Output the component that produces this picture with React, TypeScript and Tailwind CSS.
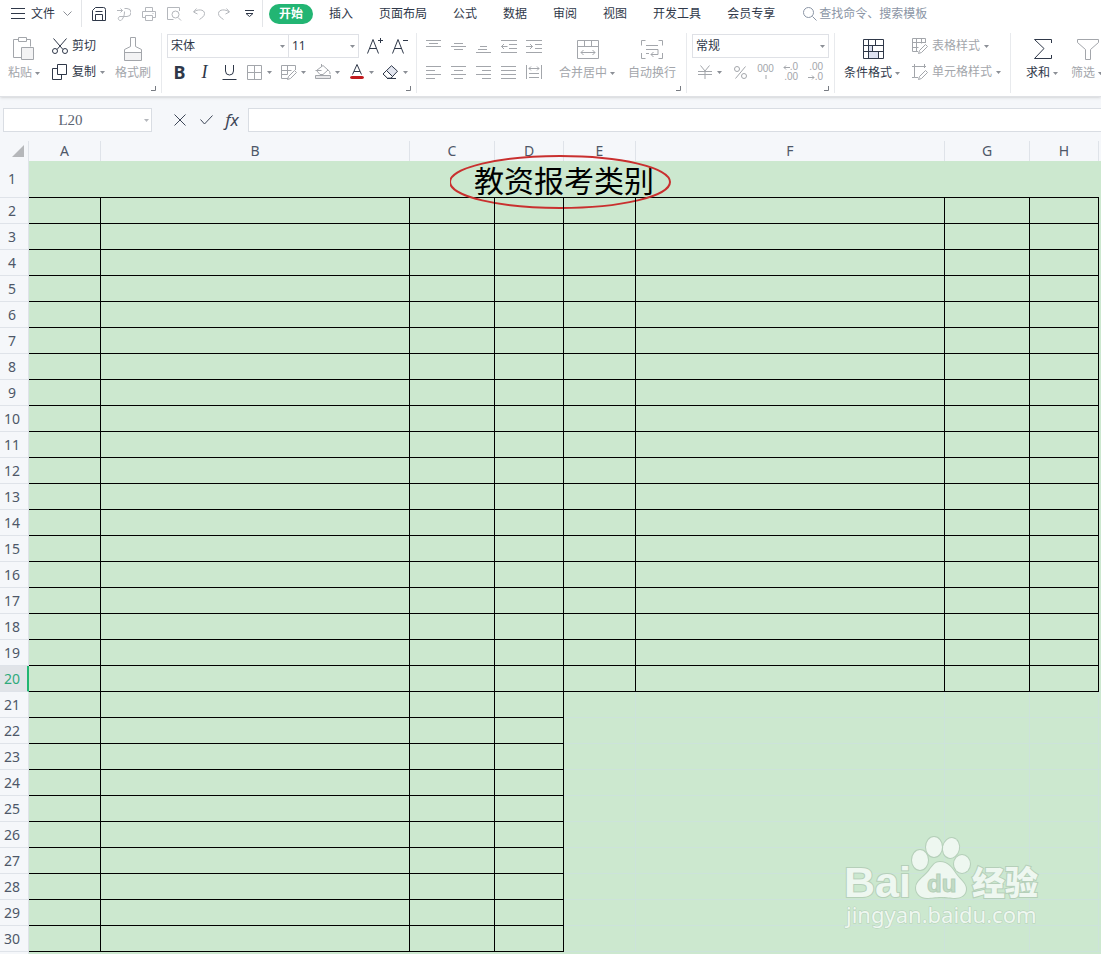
import { useState } from 'react';
import type { ReactNode } from 'react';
import clsx from 'clsx';

const columns = [
  { name: 'A', width: 'w-[72px]' },
  { name: 'B', width: 'w-[309px]' },
  { name: 'C', width: 'w-[85px]' },
  { name: 'D', width: 'w-[69px]' },
  { name: 'E', width: 'w-[72px]' },
  { name: 'F', width: 'w-[309px]' },
  { name: 'G', width: 'w-[85px]' },
  { name: 'H', width: 'w-[69px]' },
];

const rows = Array.from({ length: 29 }, (_, i) => i + 2);
const tabs = ['开始', '插入', '页面布局', '公式', '数据', '审阅', '视图', '开发工具', '会员专享'];

type IconProps = { w: number; h: number; d?: string; className?: string; children?: ReactNode };

function Icon({ w, h, d, className, children }: IconProps) {
  return (
    <svg width={w} height={h} viewBox={`0 0 ${w} ${h}`} fill="none" stroke="currentColor" className={clsx('shrink-0', className)} aria-hidden="true">
      {d && <path d={d} />}
      {children}
    </svg>
  );
}

function Caret({ className }: { className?: string }) {
  return (
    <svg width="5" height="3" viewBox="0 0 5 3" className={clsx('shrink-0', className)} aria-hidden="true">
      <path d="M0 0h5L2.5 3z" fill="currentColor" />
    </svg>
  );
}

function TallButton({ label, caret, muted, className, children }: { label: string; caret?: boolean; muted?: boolean; className: string; children: ReactNode }) {
  return (
    <button className={clsx('flex h-12 shrink-0 flex-col', muted ? 'text-[#a3a6ab]' : 'text-[#2f3849]', className)}>
      <span className="flex h-8 w-full items-center justify-center">{children}</span>
      <span className="flex h-4 items-center gap-[3px] leading-4 whitespace-nowrap">
        {label}
        {caret && <Caret className="text-[#8b8f96]" />}
      </span>
    </button>
  );
}

function RowButton({ label, caret, muted, children }: { label: string; caret?: boolean; muted?: boolean; children: ReactNode }) {
  return (
    <button className={clsx('flex h-[26px] items-center whitespace-nowrap', muted ? 'text-[#a3a6ab]' : 'text-[#2f3849]')}>
      <span className="flex w-5 items-center">{children}</span>
      {label}
      {caret && <Caret className="ml-1 text-[#8b8f96]" />}
    </button>
  );
}

function Tool({ label, caret, muted, children }: { label: string; caret?: boolean; muted?: boolean; children: ReactNode }) {
  return (
    <button
      aria-label={label}
      className={clsx('flex h-[26px] shrink-0 items-center', caret ? 'w-[34px]' : 'w-[25px]', muted ? 'text-[#a3a6ab]' : 'text-[#2f3849]')}
    >
      <span className="flex w-[25px] items-center justify-center">{children}</span>
      {caret && <Caret className="text-[#8b8f96]" />}
    </button>
  );
}

function Group({ className, launcher, children }: { className: string; launcher?: boolean; children: ReactNode }) {
  return (
    <div className={clsx('relative flex h-[60px] shrink-0', className)}>
      {children}
      {launcher && <Icon w={5} h={5} d="M4.5 0v4.5H0" className="absolute right-[5px] bottom-[2px] text-[#777b82]" />}
    </div>
  );
}

function Select({ label, options, className }: { label: string; options: string[]; className: string }) {
  return (
    <div className={clsx('relative h-6', className)}>
      <select aria-label={label} className="h-6 w-full appearance-none border border-[#dfe1e6] bg-white pl-[3px] text-xs leading-[22px] text-[#2f3849] outline-none">
        {options.map((o) => (
          <option key={o}>{o}</option>
        ))}
      </select>
      <Caret className="pointer-events-none absolute top-[11px] right-1 text-[#8b8f96]" />
    </div>
  );
}

function TitleBar() {
  const [active, setActive] = useState('开始');
  return (
    <div className="flex h-[27px] items-center text-[#2f3849]">
      <button className="ml-[11px] flex items-center">
        <Icon w={14} h={11} d="M0 .5h14M0 5.5h14M0 10.5h14" />
        <span className="mx-[6px] w-6 whitespace-nowrap">文件</span>
        <Icon w={13} h={6} d="M2.5.5l4 4 4-4" className="text-[#8b8f96]" />
      </button>
      <div className="ml-[7px] h-[27px] border-r border-[#e3e5e8]" />
      <div className="flex items-center gap-[11px] pl-[10px] text-[#b4b7bc]">
        <button aria-label="保存" className="text-[#2f3849]">
          <Icon w={14} h={14} d="M.5 13.5v-10l3-3h8a2 2 0 0 1 2 2v11zM3.5 13.5v-6h7v6M3.5 4.5h7" />
        </button>
        <button aria-label="输出">
          <Icon w={14} h={14} d="M0 3.5h5.5M3.5 1.5l2 2-2 2M7.5 1.5H10a3.5 3.5 0 0 1 0 8H3a2 2 0 1 0 2 3c1.5-2 2.5-4 2.5-8" />
        </button>
        <button aria-label="打印">
          <Icon w={14} h={14} d="M3.5 4V.5h7V4M3 10.5H.5v-6h13v6H11M3.5 8.5h7v5h-7zM10.5 6.5h1" />
        </button>
        <button aria-label="打印预览">
          <Icon w={15} h={14} d="M12.5 4V.5H.5v12h6M11 10.5l3 3">
            <circle cx="8.5" cy="7.5" r="3.5" />
          </Icon>
        </button>
        <button aria-label="撤销">
          <Icon w={13} h={12} d="M3.5.5l-3 3.5 4 2M1 4c3-3 10.5-3 10.5 1.5 0 3-2.5 4-5 6" />
        </button>
        <button aria-label="恢复">
          <Icon w={13} h={12} d="M9.5.5l3 3.5-4 2M12 4C9 1 1.5 1 1.5 5.500c0 3 2.5 4 5 6" />
        </button>
        <button aria-label="自定义快速访问工具栏" className="ml-1 text-[#2f3849]">
          <Icon w={9} h={8} d="M0 .5h9M1 3.5l3.5 3 3.5-3z" />
        </button>
      </div>
      <div className="ml-2 h-[27px] border-r border-[#e3e5e8]" />
      <nav className="ml-[6px] flex items-center">
        {tabs.map((tab) => (
          <button
            key={tab}
            onClick={() => setActive(tab)}
            className={clsx('h-5 whitespace-nowrap', tab === active ? 'mr-[3px] rounded-full bg-[#22b573] px-[10px] font-bold text-white' : 'px-[13px]')}
          >
            {tab}
          </button>
        ))}
      </nav>
      <label className="ml-[15px] flex items-center gap-[2px] text-[#8b95a5]">
        <Icon w={14} h={14} d="M9.5 9.5l4 4">
          <circle cx="5.5" cy="5.5" r="5" />
        </Icon>
        <input aria-label="查找" placeholder="查找命令、搜索模板" className="w-32 bg-transparent text-xs outline-none placeholder:text-[#8b95a5]" />
      </label>
    </div>
  );
}

function Ribbon() {
  return (
    <div className="flex divide-x divide-[#e8eaed] overflow-hidden pt-[6px] pb-[3px]">
      <Group launcher className="w-[162px] pl-2">
        <TallButton label="粘贴" caret muted className="w-8">
          <Icon w={22} h={24} d="M5.5 2.5h-5v18h8M13.5 2.5h4v7M5.5.5h8v4h-8z">
            <path d="M8.5 10.5h12v12h-12z" fill="#f3f3f4" />
          </Icon>
        </TallButton>
        <div className="ml-3 flex w-[53px] flex-col">
          <RowButton label="剪切">
            <Icon w={16} h={16} d="M1.5.5l9.5 11M14.5.5L5 11.5">
              <circle cx="3" cy="13" r="2.5" />
              <circle cx="13" cy="13" r="2.5" />
            </Icon>
          </RowButton>
          <RowButton label="复制" caret>
            <Icon w={16} h={16} d="M5.5.5h9v10h-9zM5.5 4.5h-5v11h9v-5" />
          </RowButton>
        </div>
        <TallButton label="格式刷" muted className="ml-[10px] w-9">
          <Icon w={18} h={24}>
            <path d="M.5 15.5h17v8H.5z" fill="#f3f3f4" stroke="none" />
            <path d="M6.5.5h5v9l6 3v11H.5v-11l6-3zM.5 15.5h17" />
          </Icon>
        </TallButton>
      </Group>

      <Group launcher className="w-[255px] flex-col pl-[5px]">
        <div className="flex h-[26px] items-center">
          <Select label="字体" options={['宋体', '黑体', '楷体']} className="w-[122px]" />
          <Select label="字号" options={['11', '12', '14']} className="-ml-px w-[71px]" />
          <div className="ml-1 flex">
            <Tool label="增大字号">
              <Icon w={18} h={18} d="M.5 16.5L6 2.5l5.5 14M2.5 11.5h7M11 3.5h5M13.5 1v5" />
            </Tool>
            <Tool label="减小字号">
              <Icon w={18} h={18} d="M.5 16.5L6 2.5l5.5 14M2.5 11.5h7M11 3.5h5" />
            </Tool>
          </div>
        </div>
        <div className="flex h-[26px] items-center">
          <Tool label="加粗">
            <span className="text-lg leading-5 font-bold">B</span>
          </Tool>
          <Tool label="倾斜">
            <span className="font-['Liberation_Serif',serif] text-lg leading-5 italic">I</span>
          </Tool>
          <Tool label="下划线">
            <Icon w={15} h={15} d="M3.5 0v6a4 4 0 0 0 8 0V0M.5 14.5h14" />
          </Tool>
          <Tool label="边框" caret muted>
            <Icon w={15} h={15} d="M.5.5h14v14H.5zM7.5.5v14M.5 7.5h14" />
          </Tool>
          <Tool label="绘图边框" caret muted>
            <Icon w={16} h={15} d="M7 13.5H.5V.5h14V5M.5 5.5h10M.5 9.5h6M6.5.5v9M13.5 5.5l2 2-6 6-3 1 1-3z" />
          </Tool>
          <Tool label="填充颜色" caret muted>
            <Icon w={16} h={16} d="M6.5 0v3M8 1.5L13 6l-5 4.5H5l-3.5-4L8 1.5M.5 6.5h6M13 6c1.5 1 2 2 2 4">
              <path d="M.5 11.5h15v3H.5z" fill="#e8e8ea" />
            </Icon>
          </Tool>
          <Tool label="字体颜色" caret>
            <Icon w={14} h={16} d="M2.5 10.5L7 .5l4.5 10M4 7.5h6">
              <rect x=".5" y="12.5" width="13" height="2" rx="1" fill="#c11b1f" stroke="#c11b1f" />
            </Icon>
          </Tool>
          <Tool label="清除" caret>
            <Icon w={17} h={15}>
              <path d="M9.500.7l6 5.500-6.500 7H5.500L1 9z" fill="#e3e6f0" />
              <path d="M4.500 5.500l6 6-1.500 1.700H5.500L1 9z" fill="#fff" />
              <path d="M5 13.5h9" />
            </Icon>
          </Tool>
        </div>
      </Group>

      <Group launcher className="w-[270px] pl-1">
        <div className="grid w-[125px] shrink-0 grid-cols-5 content-start">
          <Tool label="顶端对齐" muted>
            <Icon w={15} h={15} d="M0 1.5h15M3 4.5h9M0 7.5h15" />
          </Tool>
          <Tool label="垂直居中" muted>
            <Icon w={15} h={15} d="M3 4.5h9M0 7.5h15M3 10.5h9" />
          </Tool>
          <Tool label="底端对齐" muted>
            <Icon w={15} h={15} d="M4 7.5h7M2 10.5h9M0 13.5h15" />
          </Tool>
          <Tool label="减少缩进量" muted>
            <Icon w={16} h={13} d="M0 .5h16M8 4.5h8M8 8.5h8M0 12.5h16M6.5 6.5h-6M3 4L.5 6.5 3 9" />
          </Tool>
          <Tool label="增加缩进量" muted>
            <Icon w={16} h={13} d="M0 .5h16M9 4.5h7M9 8.5h7M0 12.5h16M0 6.5h6.5M4 4l2.5 2.5L4 9" />
          </Tool>
          <Tool label="左对齐" muted>
            <Icon w={15} h={13} d="M0 .5h15M0 4.5h9M0 8.5h15M0 12.5h9" />
          </Tool>
          <Tool label="水平居中" muted>
            <Icon w={15} h={13} d="M0 .5h15M3 4.5h9M0 8.5h15M3 12.5h9" />
          </Tool>
          <Tool label="右对齐" muted>
            <Icon w={15} h={13} d="M0 .5h15M6 4.5h9M0 8.5h15M6 12.5h9" />
          </Tool>
          <Tool label="两端对齐" muted>
            <Icon w={15} h={13} d="M0 .5h15M0 4.5h15M0 8.5h15M0 12.5h15" />
          </Tool>
          <Tool label="分散对齐" muted>
            <Icon w={16} h={14} d="M.5 0v14M15.5 0v14M3 3.5h10M5 1.5l-2 2 2 2M11 1.5l2 2-2 2M3 8.5h10M3 12.5h10" />
          </Tool>
        </div>
        <TallButton label="合并居中" caret muted className="ml-[13px] w-[57px]">
          <Icon w={22} h={19} d="M.5.5h21v18H.5zM.5 6.5h21M7.5.5v6M14.5.5v6M4 12.5h14M6.5 10L4 12.5 6.5 15M15.5 10l2.5 2.5-2.5 2.5" />
        </TallButton>
        <TallButton label="自动换行" muted className="ml-3 w-12">
          <Icon w={22} h={19} d="M4.5.5h-4v5M.5 13v5.5h4M17.5.5h4v5M21.5 13v5.5h-4M5 5.5h12M5 9.5h12v5h-7M12.5 12L10 14.5l2.5 2.5M5 13.5h3" />
        </TallButton>
      </Group>

      <Group launcher className="w-[148px] flex-col pl-[5px]">
        <div className="flex h-[26px] items-center">
          <Select label="数字格式" options={['常规', '数值', '货币']} className="w-[137px]" />
        </div>
        <div className="flex h-[26px]">
          <Tool label="货币" caret muted>
            <Icon w={14} h={14} d="M2.5.5L7 6l4.5-5.5M0 6.5h14M0 9.5h14M7 6v8" />
          </Tool>
          <div className="ml-[2px] flex">
            <Tool label="百分比样式" muted>
              <Icon w={13} h={13} d="M11.5.5l-10 12">
                <circle cx="3" cy="3" r="2.5" />
                <circle cx="10" cy="10" r="2.5" />
              </Icon>
            </Tool>
            <Tool label="千位分隔样式" muted>
              <span className="flex flex-col items-center font-['Liberation_Sans',sans-serif] text-[10px] leading-[10px]">
                000
                <Icon w={2} h={6} d="M1 1v4" />
              </span>
            </Tool>
            <Tool label="增加小数位数" muted>
              <span className="flex flex-col items-end font-['Liberation_Sans',sans-serif] text-[10px] leading-[10px]">
                <span className="flex items-center">
                  <Icon w={7} h={5} d="M7 2.5H1M3 .5l-2 2 2 2" />
                  .0
                </span>
                <span>.00</span>
              </span>
            </Tool>
            <Tool label="减少小数位数" muted>
              <span className="flex flex-col items-end font-['Liberation_Sans',sans-serif] text-[10px] leading-[10px]">
                <span>.00</span>
                <span className="flex items-center">
                  <Icon w={7} h={5} d="M0 2.5h6M4 .5l2 2-2 2" />
                  .0
                </span>
              </span>
            </Tool>
          </div>
        </div>
      </Group>

      <Group className="w-[176px] pl-[9px]">
        <TallButton label="条件格式" caret className="w-[58px]">
          <Icon w={21} h={20}>
            <path d="M5.5 6.5h4v6h-4zM5.5 12.5h10v7h-10z" fill="#dde1f0" stroke="none" />
            <path d="M.5.5h20v19H.5zM.5 6.5h20M.5 12.5h20M5.5.5v6M12.5.5v6M5.5 6.5v13M9.5 6.5v6M15.5 12.5v7" />
          </Icon>
        </TallButton>
        <div className="ml-[10px]">
          <RowButton label="表格样式" caret muted>
            <Icon w={16} h={16} d="M6 13.5H.5V.5h13V5M.5 4.5h13M.5 9.5h6M4.5.5v13M9.5.5v5M13.5 6.5l2 2-6 6-3 1 1-3z" />
          </RowButton>
          <RowButton label="单元格样式" caret muted>
            <Icon w={16} h={16} d="M0 2.5h14M2.5 0v13.5H6M2.5 13.5H0M12.5 0v4M13.5 6.5l2 2-6 6-3 1 1-3z" />
          </RowButton>
        </div>
      </Group>

      <Group className="pl-[15px]">
        <TallButton label="求和" caret className="w-[33px]">
          <Icon w={18} h={20} d="M17.5 4V.5H.5l9.5 9-9.5 10h17V16" />
        </TallButton>
        <TallButton label="筛选" caret muted className="ml-3 w-[33px]">
          <Icon w={22} h={21} d="M.5.5h21v3l-8 7v10h-5v-10l-8-7z" />
        </TallButton>
      </Group>
    </div>
  );
}

function FormulaBar() {
  return (
    <div className="flex h-11 items-center pt-[2px] pl-[3px] text-[#3d4657]">
      <div className="relative">
        <input aria-label="名称框" defaultValue="L20" className="h-6 w-[149px] border border-[#d9dde3] bg-white pr-[14px] text-center font-['Liberation_Serif',serif] text-[15px] text-[#5b6472] outline-none" />
        <Caret className="pointer-events-none absolute top-[11px] right-[3px] text-[#b4b7bc]" />
      </div>
      <button aria-label="取消" className="ml-[22px]">
        <Icon w={12} h={12} d="M.5.5l11 11M11.5.5l-11 11" />
      </button>
      <button aria-label="输入" className="ml-[14px]">
        <Icon w={13} h={10} d="M.5 4.5l4 4.5 8-8.5" />
      </button>
      <button aria-label="插入函数" className="ml-[11px] w-4 text-[17px] leading-5 italic">
        fx
      </button>
      <input aria-label="编辑栏" className="ml-2 h-6 min-w-0 flex-1 border border-r-0 border-[#d9dde3] bg-white px-2 text-sm outline-none" />
    </div>
  );
}

function Watermark() {
  return (
    <svg width="204" height="100" viewBox="0 0 204 100" className="pointer-events-none absolute right-[55px] bottom-[19px]" role="img" aria-label="Baidu 经验">
      <g fill="#eef7f0" stroke="#b5cfb9" strokeWidth="2" paintOrder="stroke">
        <text x="2" y="62" fontFamily="Liberation Sans, sans-serif" fontWeight="700" fontSize="43">
          Bai
        </text>
        <ellipse cx="78" cy="25" rx="8" ry="10" />
        <ellipse cx="92" cy="12" rx="8" ry="10" />
        <ellipse cx="109" cy="13" rx="8" ry="10" transform="rotate(12 109 13)" />
        <ellipse cx="120" cy="29" rx="8" ry="9" />
        <path d="M98 27c8 0 12 6 16 12 4 6 10 9 10 15 0 6-5 9-11 9-5 0-8-1-14-1s-9 1-14 1c-6 0-11-4-11-10 0-7 7-10 12-16 4-5 6-10 12-10z" />
        <text x="130" y="60" fontFamily="Noto Sans CJK SC, sans-serif" fontWeight="900" fontSize="33">
          经验
        </text>
        <text x="4" y="88" fontFamily="Noto Sans, sans-serif" fontSize="22" strokeWidth="1">
          jingyan.baidu.com
        </text>
      </g>
      <text x="85" y="57" fontFamily="Liberation Sans, sans-serif" fontWeight="700" fontSize="24" fill="#c2dcc6" stroke="#b5cfb9" strokeWidth="1">
        du
      </text>
    </svg>
  );
}

function Sheet() {
  return (
    <main className="relative flex flex-1 flex-col overflow-hidden bg-[#cce8cf]">
      <table className="w-full table-fixed border-separate border-spacing-0">
        <colgroup>
          <col className="w-[29px]" />
          {columns.map((c) => (
            <col key={c.name} className={c.width} />
          ))}
          <col />
        </colgroup>
        <thead>
          <tr className="h-5 bg-[#f5f7fa] text-sm leading-5 text-[#4e5768]">
            <td className="border-r border-[#dfe3e9] p-0">
              <svg width="12" height="12" viewBox="0 0 12 12" className="ml-3" aria-hidden="true">
                <path d="M12 0v12H0z" fill="#b5b7ba" />
              </svg>
            </td>
            {columns.map((c) => (
              <th key={c.name} scope="col" className="border-r border-[#dfe3e9] p-0 font-normal">
                {c.name}
              </th>
            ))}
            <td className="p-0" />
          </tr>
        </thead>
        <tbody>
          <tr className="h-[37px]">
            <th scope="row" className="border-r border-b border-[#dfe3e9] bg-[#f5f7fa] p-0 pr-1 text-sm font-normal text-[#4e5768]">
              1
            </th>
            <td colSpan={8} className="border-b border-black p-0 text-center">
              <span className="relative inline-block pt-1 align-middle text-[30px] leading-8 whitespace-nowrap text-black">
                教资报考类别
                <svg width="222" height="56" viewBox="0 0 222 56" fill="none" className="absolute -top-2 -left-6" aria-hidden="true">
                  <ellipse cx="110" cy="29" rx="110" ry="26" stroke="#c9302f" strokeWidth="2" />
                </svg>
              </span>
            </td>
            <td className="p-0" />
          </tr>
          {rows.map((row) => (
            <tr key={row} className="h-[26px]">
              <th
                scope="row"
                className={clsx(
                  'border-b border-b-[#dfe3e9] p-0 text-sm leading-[25px] font-normal',
                  row === 20 ? 'border-r-2 border-r-[#22b573] bg-[#e1e4e8] pr-[3px] text-[#2faa7b]' : 'border-r border-r-[#dfe3e9] bg-[#f5f7fa] pr-1 text-[#4e5768]',
                )}
              >
                {row}
              </th>
              {columns.map((c, i) => (
                <td key={c.name} className={clsx('relative border-r border-b p-0', row <= 20 || i < 4 ? 'border-black' : 'border-[#cce3da]', row > 2 && '-z-0')} />
              ))}
              <td className="border-b border-[#cce3da] p-0" />
            </tr>
          ))}
        </tbody>
      </table>
      <div className="w-[29px] flex-1 border-r border-[#dfe3e9] bg-[#f5f7fa]" />
      <Watermark />
    </main>
  );
}

export default function App() {
  return (
    <div className="flex min-h-screen flex-col bg-[#f5f7fa] font-['Noto_Sans','Noto_Sans_CJK_SC',sans-serif] text-xs">
      <header className="border-b border-[#dfe1e5] bg-white shadow-sm">
        <TitleBar />
        <Ribbon />
      </header>
      <FormulaBar />
      <Sheet />
    </div>
  );
}
